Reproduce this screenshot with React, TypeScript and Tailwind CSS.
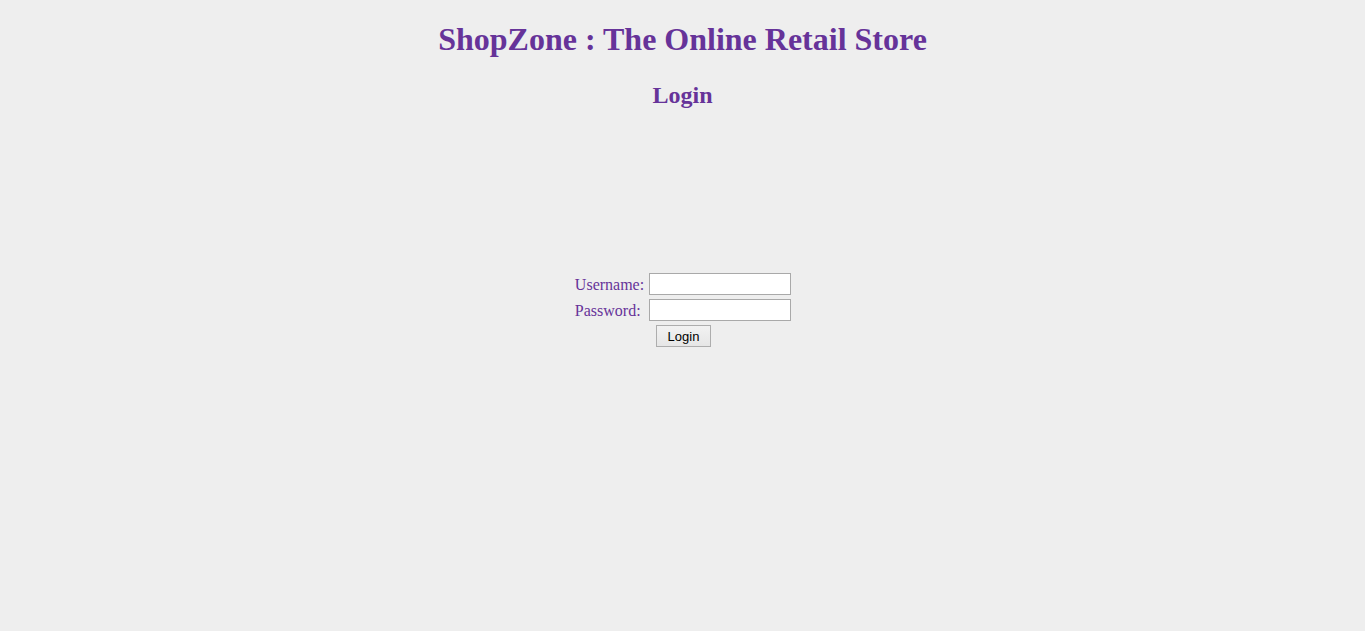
import React from "react";

export default function App() {
  return (
    <div
      className="min-h-screen w-full bg-[#eeeeee] text-center text-[#663399]"
      style={{ fontFamily: '"Liberation Serif", "Times New Roman", serif' }}
    >
      <div className="pt-[21px]">
        <h1 className="text-[32px] font-bold leading-[37px]">
          ShopZone : The Online Retail Store
        </h1>
        <h2 className="mt-[23px] text-[24px] font-bold leading-[28px]">Login</h2>
        <div className="pl-[2px]">
          <table className="mx-auto mt-[161px] border-separate border-spacing-[2px] text-[16px] leading-[18px]">
            <tbody>
              <tr>
                <td className="pb-0 pl-0 pr-[2px] pt-[2px] text-left align-middle">Username:</td>
                <td className="p-[1px] align-middle">
                  <input
                    type="text"
                    className="block h-[22px] w-[142px] border border-[#a9a9a9] bg-white px-[2px] text-[13px] text-black outline-none"
                  />
                </td>
              </tr>
              <tr>
                <td className="pb-0 pl-0 pr-[2px] pt-[2px] text-left align-middle">Password: </td>
                <td className="p-[1px] align-middle">
                  <input
                    type="password"
                    className="block h-[22px] w-[142px] border border-[#a9a9a9] bg-white px-[2px] text-[13px] text-black outline-none"
                  />
                </td>
              </tr>
              <tr>
                <td colSpan={2} className="p-[1px] text-center">
                  <button
                    type="button"
                    className="h-[22px] w-[55px] border border-[#adadad] bg-gradient-to-b from-[#f2f2f2] to-[#e6e6e6] pt-[1px] text-[13px] leading-[20px] text-black"
                    style={{ fontFamily: '"Liberation Sans", Arial, sans-serif' }}
                  >
                    Login
                  </button>
                </td>
              </tr>
            </tbody>
          </table>
        </div>
      </div>
    </div>
  );
}
